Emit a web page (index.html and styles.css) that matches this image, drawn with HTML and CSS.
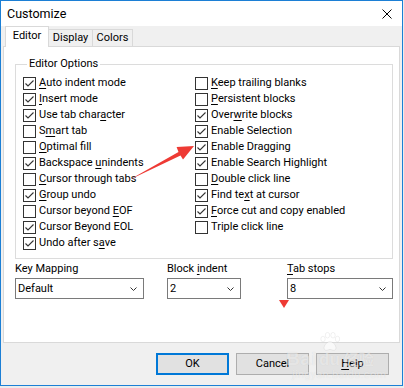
FILE: index.html
```html
<!DOCTYPE html>
<html>
<head>
<meta charset="utf-8">
<title>Customize</title>
<link rel="stylesheet" href="styles.css">
</head>
<body>
<div class="window">
  <div class="titlebar">
    <span class="title">Customize</span>
    <svg class="close" viewBox="0 0 10 10" width="10" height="10"><path d="M0.5 0.5L9.5 9.5M9.5 0.5L0.5 9.5" stroke="#000" stroke-width="1" fill="none"/></svg>
  </div>
  <div class="tabs">
    <div class="tab active">Editor</div>
    <div class="tab t-display">Display</div>
    <div class="tab t-colors">Colors</div>
  </div>
  <div class="panel">
    <fieldset class="group">
      <legend>Editor Options</legend>
      <div class="cols">
        <div class="col">
          <div class="opt"><span class="cb on"><svg viewBox="0 0 11 11"><polyline points="1.5,5.5 4,8 9.5,2.5"/></svg></span><span><u>A</u>uto indent mode</span></div>
          <div class="opt"><span class="cb on"><svg viewBox="0 0 11 11"><polyline points="1.5,5.5 4,8 9.5,2.5"/></svg></span><span><u>I</u>nsert mode</span></div>
          <div class="opt"><span class="cb on"><svg viewBox="0 0 11 11"><polyline points="1.5,5.5 4,8 9.5,2.5"/></svg></span><span>Use tab char<u>a</u>cter</span></div>
          <div class="opt"><span class="cb"></span><span>S<u>m</u>art tab</span></div>
          <div class="opt"><span class="cb"></span><span><u>O</u>ptimal fill</span></div>
          <div class="opt"><span class="cb on"><svg viewBox="0 0 11 11"><polyline points="1.5,5.5 4,8 9.5,2.5"/></svg></span><span>Backspace <u>u</u>nindents</span></div>
          <div class="opt"><span class="cb"></span><span><u>C</u>ursor through tabs</span></div>
          <div class="opt"><span class="cb on"><svg viewBox="0 0 11 11"><polyline points="1.5,5.5 4,8 9.5,2.5"/></svg></span><span><u>G</u>roup undo</span></div>
          <div class="opt"><span class="cb"></span><span>Cursor beyond <u>E</u>OF</span></div>
          <div class="opt"><span class="cb on"><svg viewBox="0 0 11 11"><polyline points="1.5,5.5 4,8 9.5,2.5"/></svg></span><span>Cursor Beyond EOL</span></div>
          <div class="opt"><span class="cb on"><svg viewBox="0 0 11 11"><polyline points="1.5,5.5 4,8 9.5,2.5"/></svg></span><span>Undo after s<u>a</u>ve</span></div>
        </div>
        <div class="col">
          <div class="opt"><span class="cb"></span><span><u>K</u>eep trailing blanks</span></div>
          <div class="opt"><span class="cb"></span><span><u>P</u>ersistent blocks</span></div>
          <div class="opt"><span class="cb on"><svg viewBox="0 0 11 11"><polyline points="1.5,5.5 4,8 9.5,2.5"/></svg></span><span>Over<u>w</u>rite blocks</span></div>
          <div class="opt"><span class="cb on"><svg viewBox="0 0 11 11"><polyline points="1.5,5.5 4,8 9.5,2.5"/></svg></span><span>Enable Selection</span></div>
          <div class="opt"><span class="cb on"><svg viewBox="0 0 11 11"><polyline points="1.5,5.5 4,8 9.5,2.5"/></svg></span><span>Enable Dragging</span></div>
          <div class="opt"><span class="cb on"><svg viewBox="0 0 11 11"><polyline points="1.5,5.5 4,8 9.5,2.5"/></svg></span><span>Enable Search Highlight</span></div>
          <div class="opt"><span class="cb"></span><span><u>D</u>ouble click line</span></div>
          <div class="opt"><span class="cb on"><svg viewBox="0 0 11 11"><polyline points="1.5,5.5 4,8 9.5,2.5"/></svg></span><span>Find te<u>x</u>t at cursor</span></div>
          <div class="opt"><span class="cb on"><svg viewBox="0 0 11 11"><polyline points="1.5,5.5 4,8 9.5,2.5"/></svg></span><span><u>F</u>orce cut and copy enabled</span></div>
          <div class="opt"><span class="cb"></span><span>Triple click line</span></div>
        </div>
      </div>
    </fieldset>
    <div class="fields">
      <div class="field f-key">
        <div class="lbl">Key Mapping</div>
        <div class="combo"><span>Default</span><svg class="chev" viewBox="0 0 7 4"><polyline points="0.5,0.5 3.5,3.5 6.5,0.5"/></svg></div>
      </div>
      <div class="field f-block">
        <div class="lbl">Block <u>i</u>ndent</div>
        <div class="combo"><span>2</span><svg class="chev" viewBox="0 0 7 4"><polyline points="0.5,0.5 3.5,3.5 6.5,0.5"/></svg></div>
      </div>
      <div class="field f-tab">
        <div class="lbl"><u>T</u>ab stops</div>
        <div class="combo"><span>8</span><svg class="chev" viewBox="0 0 7 4"><polyline points="0.5,0.5 3.5,3.5 6.5,0.5"/></svg></div>
      </div>
    </div>
  </div>
  <div class="buttons">
    <div class="btn default">OK</div>
    <div class="btn">Cancel</div>
    <div class="btn"><span><u>H</u>elp</span></div>
  </div>
</div>
<svg class="annot" viewBox="0 0 404 388" width="404" height="388">
  <polygon points="129,180 178.5,152 176.6,147.1 194,146 183,159.5 180.5,155.5" fill="#ee3a34"/>
  <polygon points="279,300 289,300 284,308" fill="#ee3a34"/>
</svg>
<div class="watermark">
  <svg class="paw" viewBox="0 0 22 20" width="22" height="20">
    <ellipse cx="4" cy="7" rx="2.2" ry="2.8"/>
    <ellipse cx="8.5" cy="3.2" rx="2.2" ry="2.8"/>
    <ellipse cx="14" cy="3.2" rx="2.2" ry="2.8"/>
    <ellipse cx="18.5" cy="7" rx="2.2" ry="2.8"/>
    <path d="M11 9.5c-3 0-6 4-6 6.5 0 2 2 2.5 3 2.2 1.5-.4 2-.7 3-.7s1.5.3 3 .7c1 .3 3-.2 3-2.2 0-2.5-3-6.5-6-6.5z"/>
  </svg>
  <div class="wm-line1"><span class="wm-bai">Bai</span><span class="wm-du">du</span><span class="wm-cn">经验</span></div>
  <div class="wm-line2">jingyan.baidu.com</div>
</div>
</body>
</html>
```

FILE: styles.css
```css
* { box-sizing: border-box; }
html, body { margin: 0; padding: 0; }
body {
  width: 404px;
  height: 388px;
  background: #ececec;
  font-family: Roboto, "Noto Sans", "Liberation Sans", sans-serif;
  font-size: 11px;
  color: #000;
  position: relative;
  overflow: hidden;
}
u { text-decoration-thickness: 1px; text-underline-offset: 2px; }

.window {
  width: 403px;
  height: 386px;
  border: 1px solid #1c7fd5;
  background: #f0f0f0;
  display: flex;
  flex-direction: column;
}
.titlebar {
  height: 25px;
  flex: none;
  background: #fff;
  display: flex;
  align-items: center;
  justify-content: space-between;
  padding: 0 10px 0 6px;
}
.title { font-size: 12.5px; line-height: 16px; }
.close { display: block; }

.tabs {
  height: 21px;
  flex: none;
  display: flex;
  align-items: flex-end;
  padding-left: 4px;
  margin-bottom: -1px;
  position: relative;
  z-index: 1;
}
.tab {
  height: 17px;
  margin-bottom: 1px;
  margin-left: -1px;
  border: 1px solid #d9d9d9;
  border-bottom: none;
  background: #f0f0f0;
  display: flex;
  align-items: center;
  justify-content: center;
  line-height: 14px;
}
.tab.active {
  width: 44px;
  height: 21px;
  margin: 0;
  background: #fff;
  position: relative;
  z-index: 2;
  padding-bottom: 2px;
}
.t-display { width: 45px; }
.t-colors { width: 41px; }

.panel {
  height: 297px;
  flex: none;
  margin: 0 2px;
  background: #fff;
  border: 1px solid #d9d9d9;
}

.group {
  margin: 9px 6px 0 11px;
  border: 1px solid #dcdcdc;
  padding: 3px 0 7px 7px;
  min-width: 0;
}
.group legend {
  margin-left: 4px;
  padding: 0 2px;
  line-height: 16px;
}
.cols {
  display: grid;
  grid-template-columns: 172px 1fr;
}
.opt {
  display: flex;
  align-items: flex-start;
  height: 16px;
  line-height: 16px;
  white-space: nowrap;
}
.cb {
  width: 13px;
  height: 13px;
  flex: none;
  margin: 2px 3px 0 0;
  border: 1px solid #333;
  background: #fff;
}
.cb svg {
  display: block;
  width: 11px;
  height: 11px;
  fill: none;
  stroke: #333;
  stroke-width: 1.1;
}

.fields {
  display: flex;
  margin: 2px 0 0 11px;
}
.lbl { line-height: 16px; height: 16px; }
.combo {
  margin-top: 1px;
  height: 21px;
  border: 1px solid #7a7a7a;
  background: #fff;
  display: flex;
  align-items: center;
  justify-content: space-between;
  padding: 0 6px 0 2px;
  line-height: 16px;
}
.chev {
  width: 7px;
  height: 4px;
  fill: none;
  stroke: #333;
  stroke-width: 1;
  display: block;
}
.f-key { width: 129px; }
.f-block { width: 74px; margin-left: 23px; }
.f-tab { width: 106px; margin-left: 46px; }

.buttons {
  display: flex;
  justify-content: flex-end;
  gap: 7px;
  padding: 10px 13px 0 0;
}
.btn {
  width: 73px;
  height: 22px;
  border: 1px solid #adadad;
  background: #e1e1e1;
  display: flex;
  align-items: center;
  justify-content: center;
  line-height: 16px;
}
.btn.default { border: 2px solid #0078d7; }

.annot {
  position: absolute;
  left: 0;
  top: 0;
  pointer-events: none;
}

.watermark {
  position: absolute;
  left: 286px;
  top: 332px;
  width: 100px;
  pointer-events: none;
  color: rgba(255, 255, 255, 0.5);
  text-shadow: 0 0 1px rgba(0, 0, 0, 0.1);
}
.paw {
  display: block;
  margin-left: 33px;
  fill: rgba(255, 255, 255, 0.6);
  stroke: rgba(0, 0, 0, 0.1);
  stroke-width: 0.6;
}
.wm-line1 {
  display: flex;
  align-items: baseline;
  margin-top: -2px;
  font-family: "Liberation Sans", sans-serif;
  font-weight: bold;
  line-height: 18px;
}
.wm-bai { font-size: 19px; letter-spacing: 0.5px; }
.wm-du { font-size: 17px; margin-left: 2px; }
.wm-cn {
  font-family: "Noto Sans CJK SC", sans-serif;
  font-size: 15px;
  margin-left: 4px;
}
.wm-line2 {
  margin: 0 0 0 6px;
  font-size: 11px;
  line-height: 11px;
  letter-spacing: 0.3px;
}
```
